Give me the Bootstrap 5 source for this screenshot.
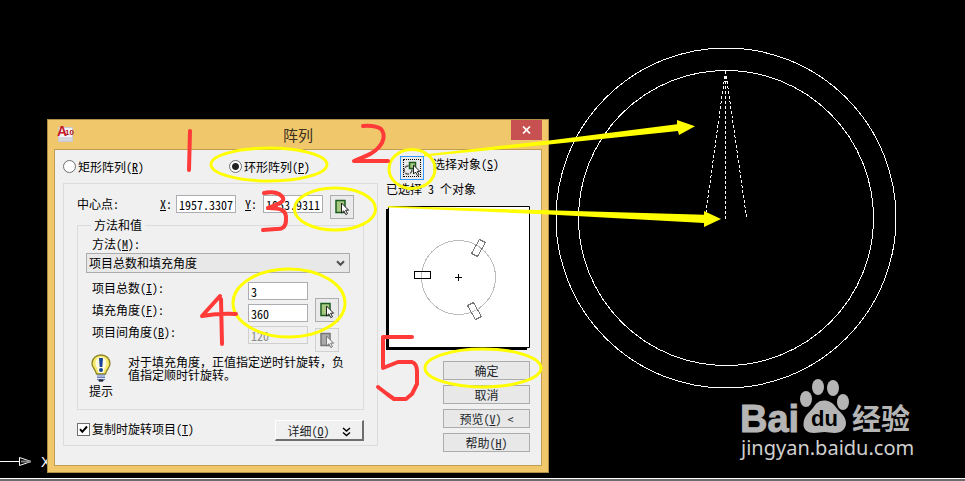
<!DOCTYPE html>
<html lang="zh-CN">
<head>
<meta charset="utf-8">
<meta name="viewport" content="width=device-width, initial-scale=1">
<title>阵列</title>
<link rel="stylesheet" href="https://cdn.jsdelivr.net/npm/bootstrap@5.3.0/dist/css/bootstrap.min.css">
<style>
body { background: #000; color: #000; font: 12px/18px "Noto Sans CJK SC", sans-serif; font-feature-settings: "hwid"; }
.stage { min-height: 100vh; border-bottom: 2px solid #6d6d6d; }
.stage::after { content: ""; position: absolute; left: 0; right: 0; bottom: 0; height: 1px; background: #fff; }
.plane { position: absolute; top: 0; left: 0; }
.overlay-marks { pointer-events: none; z-index: 5; }
.brand-mark { position: absolute; left: 736px; top: 374px; }

/* window frame */
.win { position: absolute; left: 47px; top: 119px; width: 502px; background: #f0c76a; border: 1px solid #b08f47; padding: 0 6px 6px; }
.win-title { height: 29px; font-size: 15px; color: #3a3022; }
.win-close { width: 31px; height: 20px; background: #c75050; border: 0; padding: 0; }
.win-body { background: #f0f0f0; border: 1px solid #c09c50; padding: 0 11px 13px 8px; display: grid; grid-template-columns: 1fr 144px; column-gap: 8px; align-items: start; }

/* controls */
.row-kinds { height: 33px; display: grid; grid-template-columns: 166px 1fr; align-items: center; }
.form-check-input.tick { width: 13px; height: 13px; margin: 0; border: 1px solid #707070; background-color: #fff; flex: none; float: none; }
.form-check-input.tick[type=checkbox] { border-radius: 0; }
.form-check-input.tick[type=radio]:checked { background-image: radial-gradient(circle, #222 0 3px, #fff 4px); }
.form-check-input.tick[type=checkbox]:checked { background-image: url("data:image/svg+xml,%3Csvg xmlns='http://www.w3.org/2000/svg' viewBox='0 0 11 11'%3E%3Cpath d='M2 5.2l2.3 2.6L9 2.5' fill='none' stroke='%23000' stroke-width='2'/%3E%3C/svg%3E"); }
.tick-label { padding-left: 2px; }
.panel { border: 1px solid #dcdcdc; padding: 11px 13px 4px; }
.field { width: 60px; height: 18px; padding: 0 2px; border: 1px solid #abadb3; border-radius: 0; font-size: 12px; line-height: 16px; color: #000; background: #fff; font-feature-settings: "hwid"; }
.field:disabled { background: #f0f0f0; border-color: #cfcfcf; color: #8a8a8a; }
.pick { width: 24px; height: 24px; padding: 0; border: 1px solid #adadad; border-radius: 0; background: #eaeaea; line-height: 1; flex: none; display: flex; align-items: center; justify-content: center; }
.pick:disabled { border-color: #d0d0d0; background: #efefef; opacity: 1; }
.pick-focus { border-color: #3399ff; outline: 1px dotted #000; outline-offset: -4px; }
.center-line { height: 24px; padding-right: 10px; }
.center-label { width: 83px; }
.axis { width: 16px; }
.axis-next { width: 18px; margin-left: 9px; }
.group { border: 1px solid #dcdcdc; padding: 4px 13px 0 8px; height: 191px; }
.group legend { float: none; width: auto; margin: 0 0 0 5px; padding: 0 3px; font-size: 12px; line-height: 12px; height: 12px; }
.combo { height: 20px; padding: 0 20px 0 2px; border: 1px solid #acacac; border-radius: 0; font-size: 12px; line-height: 18px; color: #000; background: #e8e8e8 url("data:image/svg+xml,%3Csvg xmlns='http://www.w3.org/2000/svg' viewBox='0 0 9 7'%3E%3Cpath d='M1 1.3l3.5 3.5L8 1.3' fill='none' stroke='%23505050' stroke-width='2'/%3E%3C/svg%3E") no-repeat right 4px center / 9px 7px; font-feature-settings: "hwid"; }
.indent { padding-left: 6px; }
.values { display: grid; grid-template-columns: 156px 60px; grid-auto-rows: 18px; row-gap: 4px; padding-top: 9px; }
.values label { line-height: 12px; }
.picks { padding-top: 25px; gap: 6px; margin-left: 7px; }
.hint-side { width: 30px; flex: none; }
.hint-text { line-height: 13px; padding-top: 3px; font-feature-settings: normal; }
.bottom-line { margin-top: 10px; height: 21px; }
.more-btn { width: 89px; height: 21px; padding: 0; font-size: 12px; line-height: 17px; border: 1px solid #fff; border-right: 2px solid #6e6e6e; border-bottom: 2px solid #6e6e6e; border-radius: 0; background: #f0f0f0; font-feature-settings: "hwid"; }
.choose { padding: 6px 0 0 14px; gap: 9px; line-height: 16px; }
.cmds { margin-top: 11px; gap: 5px; }
.cmd { width: 87px; height: 19px; padding: 0; font-size: 12px; line-height: 16px; border: 1px solid #acacac; border-radius: 0; background: #e8e8e8; font-feature-settings: "hwid"; }
</style>
<script src="https://cdn.jsdelivr.net/npm/bootstrap@5.3.0/dist/js/bootstrap.bundle.min.js"></script>
</head>
<body>
<main class="stage position-relative overflow-hidden">
  <!-- drawing area -->
  <svg class="plane" width="965" height="477" fill="none" stroke="#fff" aria-hidden="true">
    <g shape-rendering="crispEdges">
      <circle cx="726" cy="218" r="170"/>
      <circle cx="726" cy="218" r="147.500"/>
      <path d="M725.500 71V219M725.500 71L706 212M725.500 71L746.500 217" stroke-dasharray="3 2"/>
      <path d="M0 461.500H19"/>
    </g>
    <path d="M19.500 457.500v8L31 461.500z"/><path d="M21 461.500h10" stroke="#888" stroke-width="2"/>
    <text x="41" y="467" fill="#fff" stroke="none" font-family="Liberation Sans, sans-serif" font-size="14">X</text>
  </svg>

  <section class="win" role="dialog" aria-labelledby="win-name">
    <header class="win-title position-relative d-flex align-items-center justify-content-center">
      <svg class="position-absolute top-0 start-0" width="22" height="24" aria-hidden="true">
        <path d="M4.500 7.500h14v14h-14z" fill="#f4f4f6" stroke="#c9c9d4"/>
        <path d="M5 17h13v4H5z" fill="#d5d6dd"/>
        <text x="3" y="16" font-family="Liberation Sans, sans-serif" font-size="14" font-weight="700" fill="#c8171e">A</text>
        <text x="11" y="15" font-family="Liberation Sans, sans-serif" font-size="8" font-weight="700" fill="#b3141b">10</text>
      </svg>
      <span id="win-name">阵列</span>
      <button class="win-close position-absolute top-0 end-0 d-flex align-items-center justify-content-center" type="button" aria-label="关闭">
        <svg width="9" height="8"><path d="M1 .5l7 7M8 .5l-7 7" stroke="#fff" stroke-width="1.700"/></svg>
      </button>
    </header>

    <form class="win-body">
      <div>
        <div class="row-kinds">
          <div class="d-flex align-items-center"><input class="form-check-input tick" type="radio" name="kind" id="k1"><label class="tick-label" for="k1">矩形阵列(<u>R</u>)</label></div>
          <div class="d-flex align-items-center"><input class="form-check-input tick" type="radio" name="kind" id="k2" checked><label class="tick-label" for="k2">环形阵列(<u>P</u>)</label></div>
        </div>

        <div class="panel">
          <div class="center-line d-flex align-items-start">
            <span class="center-label">中心点:</span>
            <label class="axis" for="cx"><u>X</u>:</label><input class="form-control field" id="cx" value="1957.3307">
            <label class="axis-next" for="cy"><u>Y</u>:</label><input class="form-control field" id="cy" value="1053.9311">
            <button class="btn pick ms-auto" type="button" aria-label="拾取中心点"><svg width="16" height="18"><use href="#i-pick"/></svg></button>
          </div>

          <fieldset class="group">
            <legend>方法和值</legend>
            <label class="d-block indent" for="method">方法(<u>M</u>):</label>
            <select class="form-select combo" id="method"><option>项目总数和填充角度</option></select>
            <div class="d-flex indent">
              <div class="values">
                <label for="n">项目总数(<u>I</u>):</label><input class="form-control field" id="n" value="3">
                <label for="fa">填充角度(<u>F</u>):</label><input class="form-control field" id="fa" value="360">
                <label for="ia">项目间角度(<u>B</u>):</label><input class="form-control field" id="ia" value="120" disabled>
              </div>
              <div class="picks d-flex flex-column">
                <button class="btn pick" type="button" aria-label="拾取填充角度"><svg width="16" height="18"><use href="#i-pick"/></svg></button>
                <button class="btn pick" type="button" aria-label="拾取项目间角度" disabled><svg width="16" height="18"><use href="#i-pick-off"/></svg></button>
              </div>
            </div>
            <div class="d-flex">
              <div class="hint-side text-center">
                <svg class="d-block mx-auto" width="20" height="30" viewBox="0 -2 20 30" aria-hidden="true">
                  <path d="M10 1C4.500 1 1 5 1 9.500c0 4 3.500 6 4.500 10.500h9C15.500 15.500 19 13.500 19 9.500 19 5 15.500 1 10 1z" fill="#f5e96a" stroke="#8c8420" stroke-width="1.300"/>
                  <path d="M10 3C6.500 3 4.500 6 4.500 9c0 4 2.500 5 3 10h5c.500-5 3-6 3-10 0-3-2-6-5.500-6z" fill="#fdfce0"/>
                  <path d="M8 4h4l-.700 9H8.700z" fill="#17459b"/><circle cx="10" cy="16" r="2" fill="#17459b"/>
                  <path d="M6 20.500h8v5l-2 2H8l-2-2z" fill="#7180b8"/><path d="M6 22h8M6 24.500h8" stroke="#dfe5fa"/><path d="M8 26.500h4" stroke="#222" stroke-width="2"/>
                </svg>
                <span>提示</span>
              </div>
              <div class="hint-text ps-2 ms-1">对于填充角度，正值指定逆时针旋转，负值指定顺时针旋转。</div>
            </div>
          </fieldset>

          <div class="bottom-line d-flex align-items-start justify-content-between">
            <div class="d-flex align-items-center"><input class="form-check-input tick" type="checkbox" id="rot" checked><label class="tick-label" for="rot">复制时旋转项目(<u>T</u>)</label></div>
            <button class="btn more-btn" type="button">详细(<u>O</u>)&nbsp; <svg width="9" height="10" fill="none" stroke="#000" stroke-width="1.500"><path d="M1 1l3.500 3L8 1M1 5.500l3.500 3L8 5.500"/></svg></button>
          </div>
        </div>
      </div>

      <div>
        <div class="choose d-flex align-items-start">
          <button class="btn pick pick-focus" type="button" id="objs" aria-label="选择对象">
            <svg width="18" height="18" viewBox="0 0 18 18"><circle cx="5" cy="11" r="4" fill="none" stroke="#555" stroke-width="1.500" stroke-dasharray="4 1"/><path d="M6.500 3.500h6v6h-6z" fill="#a9c983" stroke="#195c1d" stroke-width="1.500"/><path d="M10.500 6v9l2-2 2 3.500 1.500-.800-1.800-3.300h2.600z" fill="#fff" stroke="#222"/></svg>
          </button>
          <label for="objs">选择对象(<u>S</u>)</label>
        </div>
        <div>已选择 3 个对象</div>
        <svg class="d-block mt-2" width="144" height="144" viewBox="386 206 144 144" fill="none" role="img" aria-label="预览">
          <path d="M386 209h141v141H386z" fill="#000"/>
          <path d="M388.500 206.500h141v141h-141z" fill="#fff" stroke="#000"/><path d="M388 209v139" stroke="#000" stroke-width="2"/>
          <g shape-rendering="crispEdges">
            <circle cx="458.500" cy="277.500" r="37" stroke="#bcbcbc"/>
            <path d="M455 277.500h7M458.500 274v7" stroke="#000"/>
            <path d="M414.500 271.500h16v7h-16z" stroke="#000"/>
            <path d="M479.500 239.500l6 3-8 14-6-3zM473.500 302.500l8 14-6 3-8-14z" stroke="#777"/>
          </g>
        </svg>
        <div class="cmds d-flex flex-column align-items-end">
          <button class="btn cmd" type="button">确定</button>
          <button class="btn cmd" type="button">取消</button>
          <button class="btn cmd" type="button">预览(<u>V</u>) &lt;</button>
          <button class="btn cmd" type="button">帮助(<u>H</u>)</button>
        </div>
      </div>
    </form>
  </section>

  <!-- step marks drawn over the window -->
  <svg class="plane overlay-marks" width="965" height="477" fill="none" aria-hidden="true">
    <g stroke="#ff0" stroke-width="3">
      <ellipse cx="269" cy="164.500" rx="58" ry="16.500"/>
      <ellipse cx="412" cy="169" rx="23" ry="19.500"/>
      <ellipse cx="335" cy="209" rx="40.500" ry="21"/>
      <ellipse cx="289" cy="303" rx="56" ry="34"/>
      <ellipse cx="483" cy="368" rx="58" ry="19"/>
    </g>
    <path fill="#ff0" d="M424 154.500L549 140.500L677 124.200V120L695 126.200L679 135L678 131L549 144.500L424 156.500zM388 206L549 210.300L704 214.700V211L721 219L704 227V223L549 214.500L388 207.500z"/>
    <g stroke="#ff3a38" stroke-width="4" stroke-linecap="round" stroke-linejoin="round">
      <path d="M190 131L189 170"/>
      <path d="M363 126Q375 125 381 129C386 135 383 143 379 147C372 155 365 156 354 161L388 161"/>
      <path d="M264 193Q274 191 279 194C288 200 282 203 268 208C281 208 287 210 286 220Q286 230 276 229L263 230"/>
      <path d="M220 296L202 316Q220 313 236 314M221 299L222 344"/>
      <path d="M412 337H383V368L398 362H412Q417 364 417 371V384L412 394L406 399H394L387 394L378 387"/>
    </g>
  </svg>

  <svg class="brand-mark" width="184" height="90" role="img" aria-label="百度经验">
    <g fill="#b5b5b5">
      <text x="4" y="58" font-family="Liberation Sans, sans-serif" font-weight="700" font-size="38" stroke="#b5b5b5">Bai</text>
      <ellipse cx="70" cy="25" rx="6" ry="8"/><ellipse cx="82" cy="13" rx="6" ry="8"/><ellipse cx="97" cy="14" rx="6" ry="8"/><ellipse cx="107" cy="28" rx="6" ry="8"/>
      <path d="M88 26.500c-5 0-8 3-10 6-3 5-10 8-10.500 17C67 56 72 59 78 59c4 0 7-1 10.500-1s6 1 10 1c7 0 11.500-4 11.500-10 0-8-8-12-11-17-2-3-6-5.500-11-5.500z"/>
      <text x="116" y="56" font-weight="700" font-size="29">经验</text>
      <text x="5" y="81" font-family="Noto Sans, sans-serif" font-size="20" fill="#d0d0d0">jingyan.baidu.com</text>
    </g>
    <text x="75" y="52" font-family="Liberation Sans, sans-serif" font-weight="700" font-size="22" fill="#000">du</text>
  </svg>

  <svg class="d-none" aria-hidden="true">
    <symbol id="i-pick" viewBox="0 0 16 18"><path d="M2 2.500h9v12H2z" fill="#a9c983" stroke="#195c1d" stroke-width="1.500"/><path d="M7.500 5v10l2.300-2.200 2 3.800 1.700-.900-1.900-3.500h3z" fill="#fff" stroke="#222"/></symbol>
    <symbol id="i-pick-off" viewBox="0 0 16 18"><path d="M2 2.500h9v12H2z" fill="#aaa" stroke="#777" stroke-width="1.500"/><path d="M7.500 5v10l2.300-2.200 2 3.800 1.700-.900-1.900-3.500h3z" fill="#f4f4f4" stroke="#777"/></symbol>
  </svg>
</main>
</body>
</html>
